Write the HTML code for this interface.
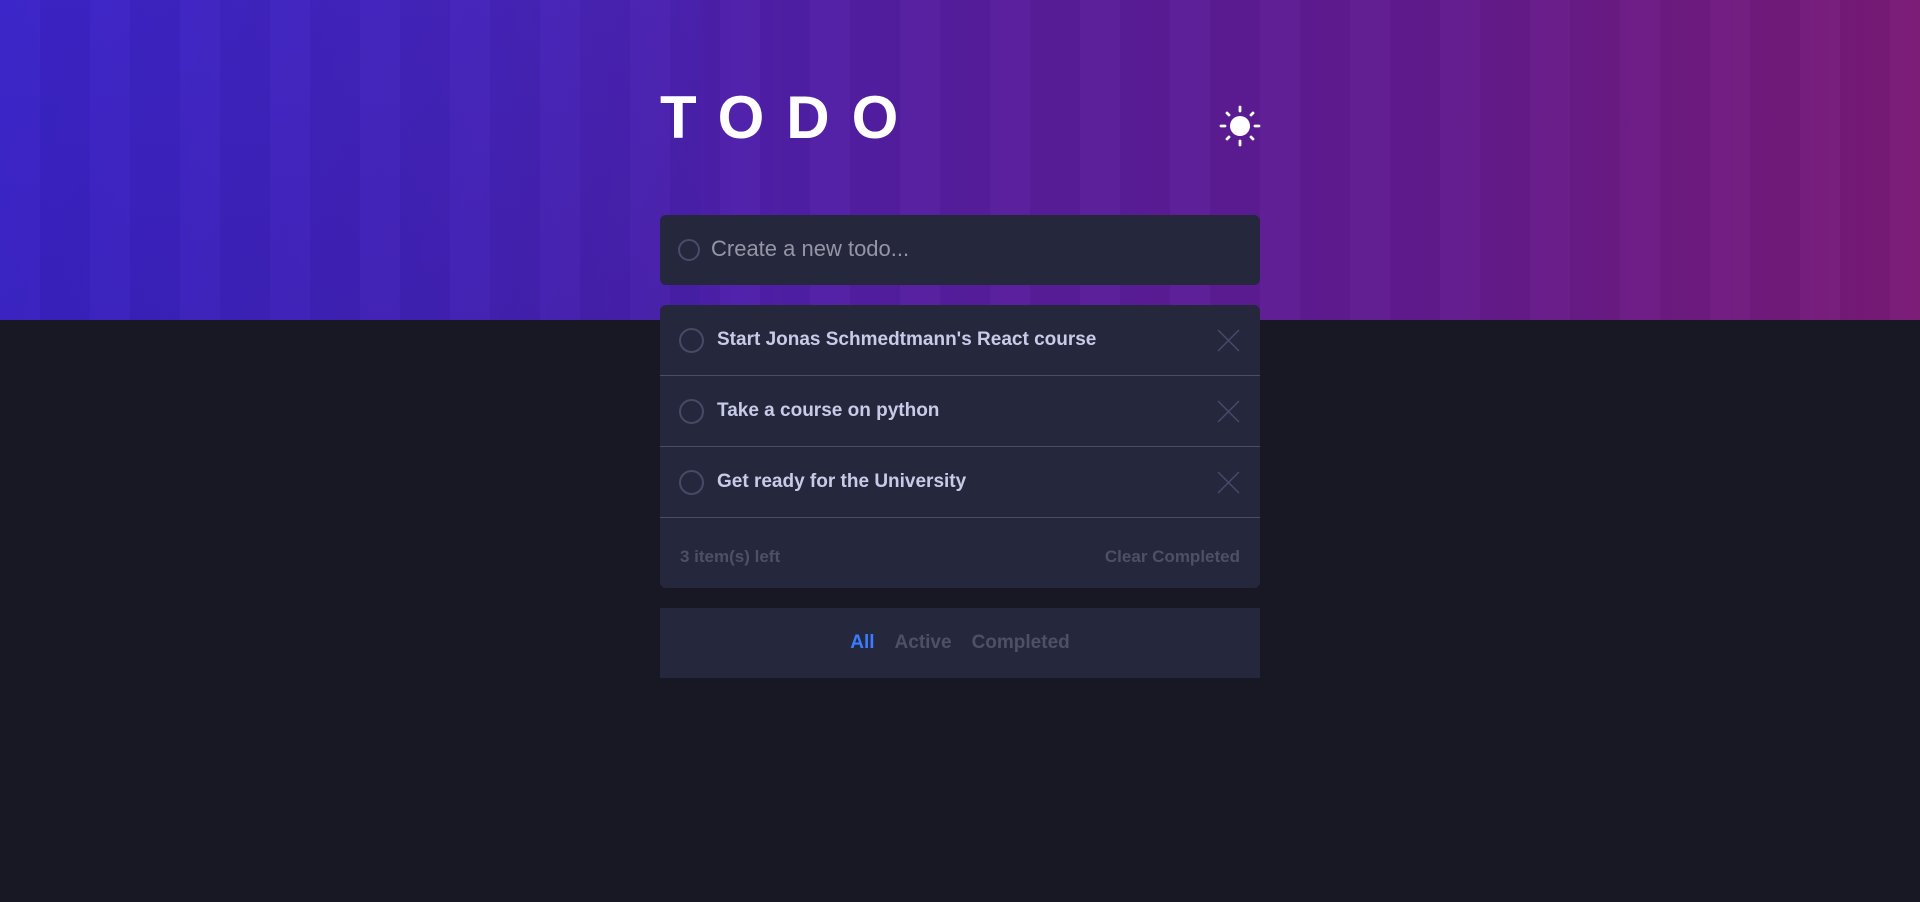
<!DOCTYPE html>
<html><head><meta charset="utf-8"><style>
*{margin:0;padding:0;box-sizing:border-box}
html,body{width:1920px;height:902px;overflow:hidden;background:#171823;font-family:"Liberation Sans",sans-serif}
.hero{position:absolute;left:0;top:0;width:1920px;height:320px;background:linear-gradient(90deg,#3a22c8 0%,#4522b8 25%,#561d9e 50%,#621b8e 75%,#7a1a76 100%);overflow:hidden}
.hero:before{content:"";position:absolute;inset:0;background:repeating-linear-gradient(90deg,rgba(255,255,255,0.015) 0 40px,rgba(0,0,0,0.03) 40px 90px);}
.hero:after{content:"";position:absolute;left:0;top:0;width:700px;height:320px;background:linear-gradient(180deg,rgba(60,50,200,0.1),rgba(30,20,120,0.1))}
.title{position:absolute;left:660px;top:88px;color:#fff;font-size:60px;font-weight:bold;letter-spacing:22px;line-height:60px}
.sun{position:absolute;left:1219px;top:105px}
.card{position:absolute;left:660px;width:600px;background:#25273d}
.input{top:215px;height:70px;border-radius:6px}
.circ{position:absolute;left:678px;width:22px;height:22px;border:2px solid #484b6a;border-radius:50%}
.ph{position:absolute;left:711px;top:236px;color:#9495a5;font-size:22px}
.list{top:305px;height:283px;border-radius:6px}
.row{position:absolute;left:0;width:600px;height:71px;border-bottom:1px solid #4a4d66}
.row .c{position:absolute;left:19px;top:23px;width:25px;height:25px;border:2px solid #474a66;border-radius:50%}
.row .t{position:absolute;left:57px;top:24px;color:#c8cbe7;font-size:19px;font-weight:bold}
.row svg{position:absolute;left:557px;top:24px}
.foot{position:absolute;top:222px;left:0;width:600px;height:61px;color:#4d5067;font-size:17px;font-weight:bold}
.filt{top:608px;height:70px;text-align:center;font-size:19px;font-weight:bold;color:#4d5067;line-height:70px}
.filt span{margin:0 10px}
</style></head><body>
<div class="hero"></div>
<div class="title">TODO</div>
<svg class="sun" width="42" height="42" viewBox="0 0 42 42"><circle cx="21" cy="21" r="10" fill="#fff"/><g stroke="#fff" stroke-width="2.8" stroke-linecap="round"><line x1="21" y1="2" x2="21" y2="6"/><line x1="21" y1="36" x2="21" y2="40"/><line x1="2" y1="21" x2="6" y2="21"/><line x1="36" y1="21" x2="40" y2="21"/><line x1="8" y1="8" x2="10" y2="10"/><line x1="32" y1="32" x2="34" y2="34"/><line x1="34" y1="8" x2="32" y2="10"/><line x1="8" y1="34" x2="10" y2="32"/></g></svg>
<div class="card input"></div>
<div class="circ" style="top:239px"></div>
<div class="ph">Create a new todo...</div>
<div class="card list">
<div class="row" style="top:0"><div class="c"></div><div class="t">Start Jonas Schmedtmann's React course</div><svg width="23" height="23"><path d="M1 1L22 22M22 1L1 22" stroke="#494c6b" stroke-width="1.3"/></svg></div>
<div class="row" style="top:71px"><div class="c"></div><div class="t">Take a course on python</div><svg width="23" height="23"><path d="M1 1L22 22M22 1L1 22" stroke="#494c6b" stroke-width="1.3"/></svg></div>
<div class="row" style="top:142px"><div class="c"></div><div class="t">Get ready for the University</div><svg width="23" height="23"><path d="M1 1L22 22M22 1L1 22" stroke="#494c6b" stroke-width="1.3"/></svg></div>
<div class="foot"><span style="position:absolute;left:20px;top:20px">3 item(s) left</span><span style="position:absolute;right:20px;top:20px">Clear Completed</span></div>
</div>
<div class="card filt"><span style="color:#3a7cfd">All</span><span>Active</span><span>Completed</span></div>
</body></html>
